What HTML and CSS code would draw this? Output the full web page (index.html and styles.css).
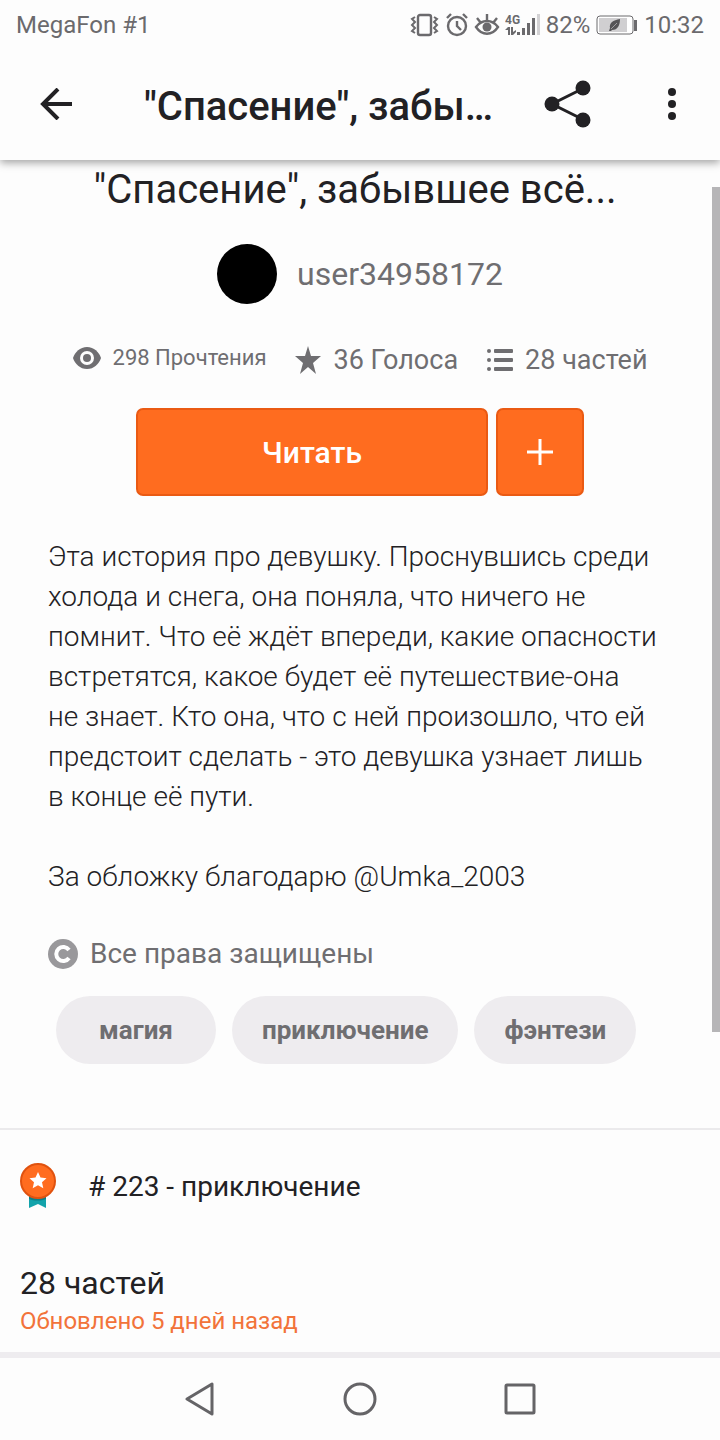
FILE: index.html
```html
<!DOCTYPE html>
<html lang="ru">
<head>
  <meta charset="UTF-8">
  <meta name="viewport" content="width=device-width, initial-scale=1.0">
  <title>"Спасение", забывшее всё...</title>
  <link rel="stylesheet" href="styles.css">
</head>
<body>
  <div class="status-bar">
    <span class="carrier">MegaFon #1</span>
    <div class="status-icons">
      <!-- vibrate -->
      <svg width="30" height="24" viewBox="0 0 30 24" fill="none" stroke="#6b6a6d" stroke-width="2.4">
        <rect x="8" y="2" width="13" height="20" rx="2"/>
        <path d="M5 4L2 6l3 3-3 3 3 3-3 3 3 2M24 4l3 2-3 3 3 3-3 3 3 3-3 2" stroke-width="2"/>
      </svg>
      <!-- alarm -->
      <svg width="24" height="24" viewBox="0 0 24 24" fill="none" stroke="#6b6a6d" stroke-width="2.4">
        <circle cx="12" cy="13" r="9"/>
        <path d="M12 8v5l4 4M2 5l4-4M22 5l-4-4"/>
      </svg>
      <!-- eye comfort -->
      <svg width="26" height="24" viewBox="0 0 26 24" fill="none" stroke="#6b6a6d" stroke-width="2.4">
        <path d="M2 14c6-8 16-8 22 0-6 9-16 9-22 0z"/>
        <path d="M13 1v7M3 5l4 5M23 5l-4 5"/>
        <circle cx="13" cy="14" r="4.5" fill="#6b6a6d" stroke="none"/>
      </svg>
      <!-- signal -->
      <svg width="36" height="24" viewBox="0 0 36 24" fill="#6b6a6d">
        <text class="net" x="0" y="11">4G</text>
        <path d="M0 17l3-3h2v8H3v-5H0zM6 14h2v5l3-2v2l-3 3H6z"/>
        <path d="M12 19h3v3h-3zM17 15h3v7h-3zM22 10h3v12h-3zM27 5h3v17h-3z"/>
        <path fill="#d3d2d4" d="M32 1h3v21h-3z"/>
      </svg>
      <span>82%</span>
      <!-- battery -->
      <svg class="battery" width="42" height="24" viewBox="0 0 42 24">
        <rect x="2" y="3" width="36" height="18" rx="3" fill="#fff" stroke="#6b6a6d"/>
        <path fill="#d0cfd1" d="M4 5h28v14H4z"/>
        <rect x="39" y="7" width="3" height="11" fill="#6b6a6d"/>
        <path fill="#555457" d="M25 6c-7 1-11 4-10 9l-1 3h2l1-1c6 0 8-5 8-11z"/>
        <path d="M16 16l6-6" stroke="#a09fa2"/>
      </svg>
      <span class="time">10:32</span>
    </div>
  </div>

  <header class="app-bar">
    <button class="icon-btn" aria-label="Назад">
      <svg width="32" height="32" viewBox="0 0 32 32" fill="none" stroke="#222124" stroke-width="4">
        <path d="M18 1L3 16l15 15M3 16h29"/>
      </svg>
    </button>
    <h1>"Спасение", забы…</h1>
    <button class="icon-btn" aria-label="Поделиться">
      <svg width="48" height="48" viewBox="0 0 48 48" fill="#222124">
        <path d="M40 8L8 24l32 16" fill="none" stroke="#222124" stroke-width="3"/>
        <circle cx="8" cy="24" r="7.5"/>
        <circle cx="39" cy="8" r="7.5"/>
        <circle cx="39" cy="40" r="7.5"/>
      </svg>
    </button>
    <button class="icon-btn more" aria-label="Ещё">
      <svg width="8" height="32" viewBox="0 0 8 32" fill="#222124">
        <circle cx="4" cy="4" r="4"/>
        <circle cx="4" cy="16" r="4"/>
        <circle cx="4" cy="28" r="4"/>
      </svg>
    </button>
  </header>

  <main>
    <div class="scrollbar"></div>

    <section class="story">
      <h2>"Спасение", забывшее всё...</h2>

      <a class="author" href="#">
        <span class="avatar"></span>
        <span>user34958172</span>
      </a>

      <div class="stats">
        <div class="stat reads">
          <svg width="28" height="24" viewBox="0 0 28 24">
            <path fill="#6f6e71" d="M14 1C7 1 2 6 0 12c2 6 7 11 14 11s12-5 14-11C26 6 21 1 14 1z"/>
            <circle cx="14" cy="12" r="7" fill="#fdfdfd"/>
            <circle cx="14" cy="12" r="4" fill="#6f6e71"/>
          </svg>
          <span>298 Прочтения</span>
        </div>
        <div class="stat">
          <svg width="26" height="28" viewBox="0 0 26 28" fill="#6f6e71">
            <path d="M13 0l3 10h10l-8 7 3 11-8-7-8 7 3-11-8-7h10z"/>
          </svg>
          <span>36 Голоса</span>
        </div>
        <div class="stat">
          <svg width="26" height="24" viewBox="0 0 26 24" fill="#6f6e71">
            <circle cx="2" cy="3" r="2"/>
            <circle cx="2" cy="12" r="2"/>
            <circle cx="2" cy="21" r="2"/>
            <rect x="7" y="1" width="19" height="4" rx="1"/>
            <rect x="7" y="10" width="19" height="4" rx="1"/>
            <rect x="7" y="19" width="19" height="4" rx="1"/>
          </svg>
          <span>28 частей</span>
        </div>
      </div>

      <div class="actions">
        <button class="btn read">Читать</button>
        <button class="btn add" aria-label="Добавить">
          <svg width="26" height="26" viewBox="0 0 26 26" stroke="#fff" stroke-width="3">
            <path d="M13 0v26M0 13h26"/>
          </svg>
        </button>
      </div>

      <div class="description">
        <p>Эта история про девушку. Проснувшись среди холода и снега, она поняла, что ничего не помнит. Что её ждёт впереди, какие опасности встретятся, какое будет её путешествие-она не&nbsp;знает. Кто она, что с ней произошло, что ей предстоит сделать - это девушка узнает лишь в&nbsp;конце её пути.</p>
        <p>За обложку благодарю @Umka_2003</p>
      </div>

      <div class="rights">
        <svg width="30" height="30" viewBox="0 0 30 30">
          <circle cx="15" cy="15" r="15" fill="#99989b"/>
          <path d="M21 11a7 7 0 1 0 0 8" fill="none" stroke="#fff" stroke-width="4"/>
        </svg>
        <span>Все права защищены</span>
      </div>

      <div class="tags">
        <a class="tag" href="#">магия</a>
        <a class="tag" href="#">приключение</a>
        <a class="tag" href="#">фэнтези</a>
      </div>
    </section>

    <section class="rank">
      <svg width="36" height="46" viewBox="0 0 36 46">
        <path fill="#13a3ab" d="M9 30h17v15l-8-4-9 4z"/>
        <path fill="#0b7f87" d="M9 33h17v3c-5 2-12 2-17 0z"/>
        <circle cx="18" cy="18" r="17" fill="#ff6c1f" stroke="#e0520f" stroke-width="2"/>
        <path fill="#fff" d="M18 9l2.500 5.500 6 .7-4.500 4 1.300 6L18 22.200l-5.300 3 1.300-6-4.500-4 6-.7z"/>
      </svg>
      <span># 223 - приключение</span>
    </section>

    <section class="parts">
      <h3>28 частей</h3>
      <p>Обновлено 5 дней назад</p>
    </section>
  </main>

  <nav class="nav-bar">
    <button class="icon-btn" aria-label="Назад">
      <svg width="34" height="34" viewBox="0 0 34 34" fill="none" stroke="#656467" stroke-width="3" stroke-linejoin="round">
        <path d="M29 2v30L4 17z"/>
      </svg>
    </button>
    <button class="icon-btn" aria-label="Домой">
      <svg width="34" height="34" viewBox="0 0 34 34" fill="none" stroke="#656467" stroke-width="3">
        <circle cx="17" cy="17" r="15"/>
      </svg>
    </button>
    <button class="icon-btn" aria-label="Недавние">
      <svg width="34" height="34" viewBox="0 0 34 34" fill="none" stroke="#656467" stroke-width="3">
        <rect x="3" y="3" width="28" height="28" rx="1"/>
      </svg>
    </button>
  </nav>
</body>
</html>
```

FILE: styles.css
```css
* {
  box-sizing: border-box;
}
body {
  margin: 0;
  min-height: 100vh;
  display: flex;
  flex-direction: column;
  font-family: Roboto, "Noto Sans", sans-serif;
  background-color: #fdfdfd;
  color: #222124;
}
h1, h2, h3, p {
  margin: 0;
}
a {
  color: inherit;
  text-decoration: none;
}
button {
  padding: 0;
  border: none;
  background: none;
  font-family: inherit;
  cursor: pointer;
}
svg {
  display: block;
  flex-shrink: 0;
}

/* status bar */
.status-bar {
  display: flex;
  justify-content: space-between;
  align-items: center;
  height: 50px;
  padding: 0 16px;
  background-color: #fdfdfd;
  font-size: 24px;
  color: #6b6a6d;
  position: relative;
  z-index: 2;
}
.status-icons {
  display: flex;
  align-items: center;
  gap: 5px;
}
.net {
  font-size: 12px;
  font-weight: 700;
}
.time {
  margin-left: 2px;
}

/* app bar */
.app-bar {
  display: flex;
  align-items: center;
  height: 110px;
  padding: 0 44px 2px 40px;
  background-color: #fdfdfd;
  box-shadow: 0 3px 8px rgba(0, 0, 0, 0.35);
  position: relative;
  z-index: 1;
}
.app-bar h1 {
  flex: 1;
  margin: 0 40px 0 72px;
  padding-top: 6px;
  white-space: nowrap;
  font-size: 40px;
  font-weight: 500;
  line-height: 56px;
}
.icon-btn {
  display: flex;
  align-items: center;
  justify-content: center;
}
.more {
  margin-left: 76px;
}

/* story */
main {
  flex: 1;
  position: relative;
}
.scrollbar {
  position: absolute;
  top: 27px;
  right: 0;
  width: 8px;
  height: 845px;
  background-color: #b6b5b7;
}
.story {
  padding: 5px 48px 64px;
  border-bottom: 2px solid #ebeaec;
}
.story h2 {
  margin-right: 10px;
  text-align: center;
  font-size: 40px;
  font-weight: 400;
  line-height: 50px;
}
.author {
  display: flex;
  justify-content: center;
  align-items: center;
  gap: 20px;
  margin-top: 29px;
  font-size: 32px;
  color: #6f6e71;
}
.avatar {
  width: 60px;
  height: 60px;
  border-radius: 50%;
  background-color: #000;
}
.stats {
  display: flex;
  justify-content: center;
  gap: 29px;
  margin-top: 36px;
  font-size: 27px;
  line-height: 40px;
  color: #6f6e71;
}
.stat {
  display: flex;
  align-items: center;
  gap: 12px;
}
.reads {
  font-size: 22px;
  line-height: 36px;
  align-self: flex-start;
}
.actions {
  display: flex;
  justify-content: center;
  gap: 8px;
  margin-top: 28px;
}
.btn {
  display: flex;
  align-items: center;
  justify-content: center;
  height: 88px;
  border: 2px solid #ea5a13;
  border-radius: 7px;
  background-color: #ff6c1f;
  color: #fff;
  font-size: 30px;
  font-weight: 500;
}
.read {
  width: 352px;
}
.add {
  width: 88px;
}
.description {
  margin-top: 41px;
  font-size: 28px;
  font-weight: 300;
  line-height: 40px;
}
.description p + p {
  margin-top: 40px;
}
.rights {
  display: flex;
  align-items: center;
  gap: 12px;
  margin-top: 37px;
  font-size: 28px;
  line-height: 40px;
  color: #6f6e71;
}
.tags {
  display: flex;
  gap: 16px;
  margin: 22px 0 0 8px;
}
.tag {
  min-width: 160px;
  padding: 0 30px;
  border-radius: 34px;
  background-color: #eeecef;
  color: #6f6e71;
  text-align: center;
  font-size: 26px;
  font-weight: 700;
  line-height: 68px;
}

/* rank and parts */
.rank {
  display: flex;
  align-items: center;
  gap: 32px;
  padding: 33px 20px;
  font-size: 28px;
}
.parts {
  padding: 21px 20px 11px;
}
.parts h3 {
  font-size: 32px;
  font-weight: 400;
  line-height: 40px;
}
.parts p {
  color: #f2733a;
  font-size: 24px;
  line-height: 36px;
}

/* navigation bar */
.nav-bar {
  display: flex;
  justify-content: center;
  gap: 126px;
  height: 88px;
  border-top: 6px solid #eeecef;
}
```
